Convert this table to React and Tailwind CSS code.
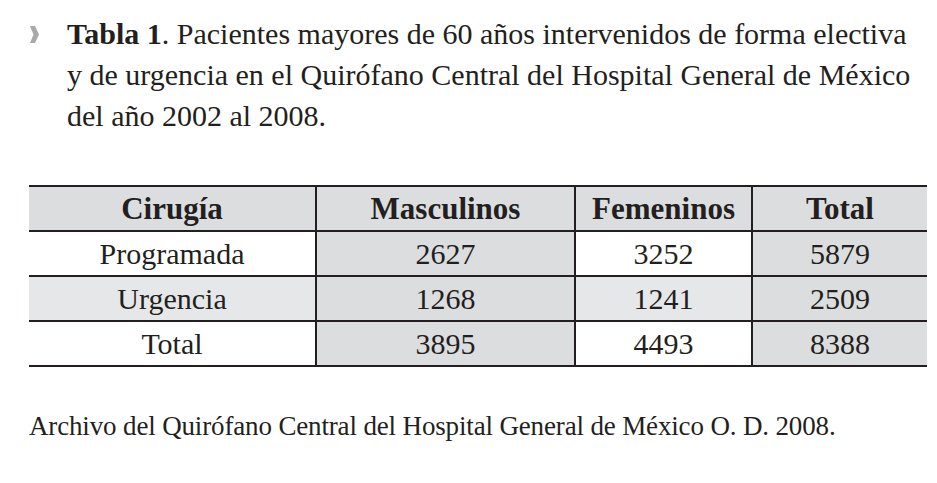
const rows = [
  { name: "Programada", m: "2627", f: "3252", t: "5879", shade: false },
  { name: "Urgencia", m: "1268", f: "1241", t: "2509", shade: true },
  { name: "Total", m: "3895", f: "4493", t: "8388", shade: false },
];

const App = () => {
  return (
    <div
      className="w-[937px] h-[483px] bg-white text-[#231f20] overflow-hidden"
      style={{ fontFamily: '"Liberation Serif", "DejaVu Serif", serif' }}
    >
      {/* caption */}
      <div className="flex pl-[29px] pt-[13px]">
        <svg width="11" height="17" viewBox="0 0 11 17" className="mt-[13px] mr-[27px] shrink-0">
          <polygon points="1,0 6,0 10,8.5 6,17 1,17 4.5,8.5" fill="#a7a9ac" />
        </svg>
        <p className="text-[30px] leading-[41px] w-[880px] whitespace-nowrap">
          <span className="font-bold">Tabla 1</span>. Pacientes mayores de 60 años intervenidos de forma electiva
          <br />y de urgencia en el Quirófano Central del Hospital General de México
          <br />del año 2002 al 2008.
        </p>
      </div>

      {/* table */}
      <div className="ml-[29px] mt-[49px] w-[898px] border-t-2 border-[#231f20]">
        <div className="grid grid-cols-[288px_259px_177px_174px] grid-rows-[43px] h-[45px] bg-[#dcdddf] border-b-2 border-[#231f20] text-[31px] leading-none font-bold">
          <div className="flex items-center justify-center border-r-2 border-[#231f20]">Cirugía</div>
          <div className="flex items-center justify-center border-r-2 border-[#231f20]">Masculinos</div>
          <div className="flex items-center justify-center border-r-2 border-[#231f20]">Femeninos</div>
          <div className="flex items-center justify-center">Total</div>
        </div>
        {rows.map((r, i) => (
          <div
            key={i}
            className="grid grid-cols-[288px_259px_177px_174px] grid-rows-[43px] h-[45px] border-b-2 border-[#231f20] text-[30px] leading-none"
          >
            <div className={"flex items-center justify-center border-r-2 border-[#231f20] " + (r.shade ? "bg-[#e6e7e8]" : "bg-white")}>
              {r.name}
            </div>
            <div className="flex items-center justify-center border-r-2 border-[#231f20] bg-[#dcdddf]">{r.m}</div>
            <div className={"flex items-center justify-center border-r-2 border-[#231f20] " + (r.shade ? "bg-[#e6e7e8]" : "bg-white")}>
              {r.f}
            </div>
            <div className="flex items-center justify-center bg-[#dcdddf]">{r.t}</div>
          </div>
        ))}
      </div>

      {/* source */}
      <p className="ml-[29px] mt-[39px] text-[27px] tracking-[-0.15px] whitespace-nowrap">
        Archivo del Quirófano Central del Hospital General de México O. D. 2008.
      </p>
    </div>
  );
};

export default App;
